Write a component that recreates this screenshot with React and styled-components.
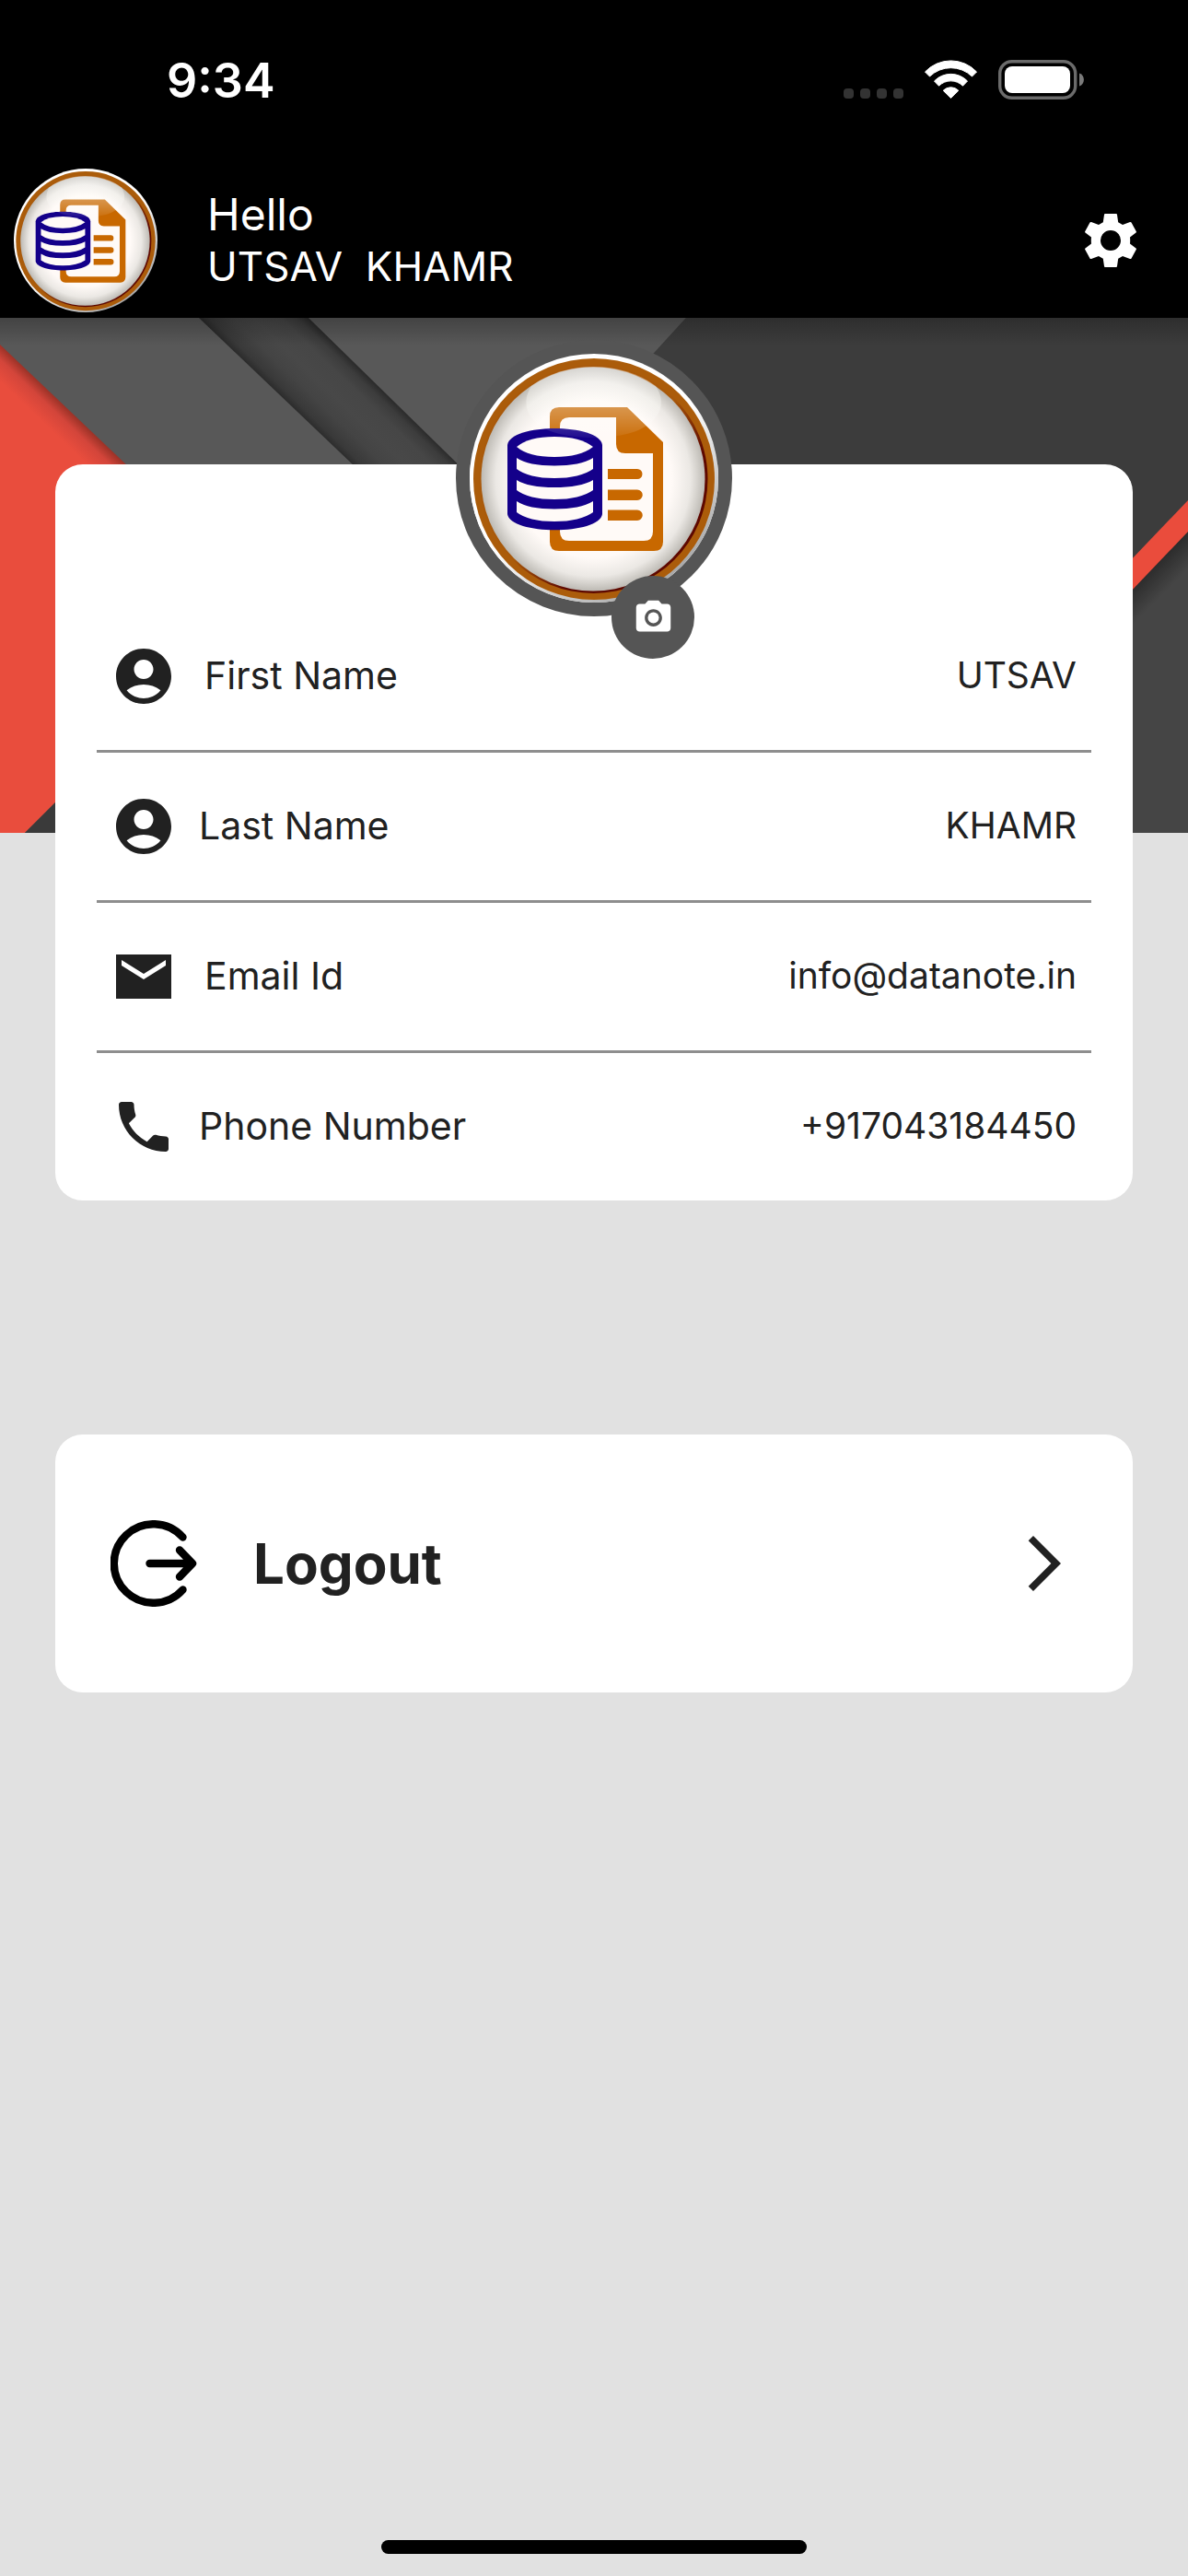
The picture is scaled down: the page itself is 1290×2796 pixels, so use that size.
import React from 'react';
import styled, { createGlobalStyle } from 'styled-components';
import { MdAccountCircle, MdPhone, MdCameraAlt, MdArrowForwardIos } from 'react-icons/md';

const GlobalStyle = createGlobalStyle`
  * { box-sizing: border-box; }
  body {
    margin: 0;
    background-color: #e1e1e1;
    color: #212121;
    font-family: Inter, Roboto, sans-serif;
  }
`;

const user = {
  firstName: 'UTSAV',
  lastName: 'KHAMR',
  email: 'info@datanote.in',
  phone: '+917043184450',
};

const MailIcon = () => (
  <svg viewBox="0 0 24 24" fill="currentColor" width="1em" height="1em">
    <path d="M22 4H2v16h20V4zm-2 4-8 5-8-5V6l8 5 8-5v2z" />
  </svg>
);

const fields = [
  { label: 'First Name', value: user.firstName, icon: <MdAccountCircle />, inset: true },
  { label: 'Last Name', value: user.lastName, icon: <MdAccountCircle /> },
  { label: 'Email Id', value: user.email, icon: <MailIcon />, inset: true },
  { label: 'Phone Number', value: user.phone, icon: <MdPhone /> },
];

const SettingsIcon = () => (
  <svg viewBox="0 0 56 58" fill="currentColor" width="56" height="58">
    <path
      fillRule="evenodd"
      d="M22 0h12q1 0 1 1l1.200 8.300 4.800 2.700 8-3q1-.3 1.500.5l5.300 9.700q.4.800-.3 1.300l-6.500 5q.4 3.500 0 7l6.500 5q.7.500.3 1.300l-5.300 9.700q-.5.800-1.500.5l-8-3-4.800 2.700L35 57q0 1-1 1H22q-1 0-1-1l-1.200-8.300L15 46l-8 3q-1 .3-1.500-.5L.2 38.800q-.4-.8.3-1.300l6.500-5q-.4-3.500 0-7l-6.500-5q-.7-.5-.3-1.300l5.300-9.700Q6 8.700 7 9l8 3 4.800-2.700L21 1q0-1 1-1zM28 18a11 11 0 1 0 0 22a11 11 0 1 0 0-22z"
    />
  </svg>
);

const StatusIcons = () => (
  <svg width="262" height="44" viewBox="0 0 262 44">
    <g fill="#333">
      <rect x="0" y="31" width="11" height="11" rx="4" />
      <rect x="18" y="31" width="11" height="11" rx="4" />
      <rect x="36" y="31" width="11" height="11" rx="4" />
      <rect x="54" y="31" width="11" height="11" rx="4" />
    </g>
    <g fill="#fff" stroke="#fff" strokeWidth="1" strokeLinejoin="round">
      <path d="M88.500 13a38.500 38.500 0 0 1 56 0l-5 5a33 33 0 0 0-46 0z" />
      <path d="M98.500 23a25 25 0 0 1 36 0l-5 5.200a18.500 18.500 0 0 0-26 0z" />
      <path d="M108.200 33.300a11.500 11.500 0 0 1 16.600 0l-8.300 8.200z" />
    </g>
    <rect x="169.700" y="1.700" width="82" height="39.600" rx="13" fill="none" stroke="#6b6b6b" strokeWidth="3.400" />
    <rect x="175" y="7" width="71" height="29" rx="8" fill="#fff" />
    <path d="M256 14.500c6.500 2 6.500 12 0 14z" fill="#7a7a7a" />
  </svg>
);

const LogoutIcon = () => (
  <svg width="94" height="94" viewBox="0 0 94 94" fill="none" stroke="#000" strokeWidth="8.400" strokeLinecap="round" strokeLinejoin="round">
    <path d="M78.500 18.500a42.800 42.800 0 1 0 0 57" />
    <path d="M42.500 47h46M75 32.500 89 47 75 61.500" />
  </svg>
);

// round data/document badge, used in the app bar and on the profile card
const Logo = ({ id, size }) => (
  <svg width={size} height={size} viewBox="0 0 270 270">
    <defs>
      <linearGradient id={`${id}-rim`} x1="0.2" y1="0.1" x2="0.8" y2="0.9">
        <stop offset="0.5" stopColor="#fff" />
        <stop offset="1" stopColor="#a9a9a9" />
      </linearGradient>
      <radialGradient id={`${id}-disk`}>
        <stop offset="0.7" stopColor="#fffaf7" />
        <stop offset="0.87" stopColor="#ebe8e4" />
        <stop offset="1" stopColor="#bdbab4" />
      </radialGradient>
      <linearGradient id={`${id}-ring`} x1="0.2" y1="0.2" x2="0.8" y2="0.8">
        <stop offset="0.5" stopColor="#a9590a" />
        <stop offset="0.8" stopColor="#5e0800" />
      </linearGradient>
      <linearGradient id={`${id}-gloss`} x1="0" y1="0" x2="0" y2="1">
        <stop offset="0" stopColor="#fff" stopOpacity="0.4" />
        <stop offset="0.5" stopColor="#fffffa" stopOpacity="0.35" />
        <stop offset="1" stopColor="#fff" stopOpacity="0.05" />
      </linearGradient>
    </defs>
    <circle cx="135" cy="135" r="135" fill={`url(#${id}-rim)`} />
    <circle cx="135" cy="136" r="131" fill="#ab5c0a" />
    <circle cx="134.500" cy="136" r="124" fill={`url(#${id}-ring)`} />
    <circle cx="134" cy="136" r="121.500" fill={`url(#${id}-disk)`} />
    <path
      d="M97 58h74l39 38v108q0 10-10 10H97q-10 0-10-10V68q0-10 10-10z"
      fill="#c86800"
    />
    <path d="M108 69h51v29q0 10 10 10h30v85q0 10-10 10h-81q-10 0-10-10V79q0-10 10-10z" fill="#fffaf7" />
    <path
      d="M150 125h32a5.500 5.500 0 0 1 0 11h-32zM150 147.500h32a5.500 5.500 0 0 1 0 11.500h-32zM150 169.500h32a5.500 5.500 0 0 1 0 11.500h-32z"
      fill="#c86800"
    />
    <path d="M41 99C44 75 141 75 144 99v75C141 197 44 197 41 174z" fill="#14008a" />
    <g fill="#fffaf7">
      <path d="M51 101Q64 90 92 90T134 101Q120 112 92 112T51 101z" />
      <path d="M51 113Q64 121.500 92 121.500T134 113V125Q120 135 92 135T51 125z" />
      <path d="M51 137Q64 145 92 145T134 137V148Q120 158 92 158T51 148z" />
      <path d="M51 160Q64 168.500 92 168.500T134 160V172Q120 182 92 182T51 172z" />
    </g>
    <path d="M67 35C104 7 165 7 202 35C218 58 203 91 134 91S52 58 67 35z" fill={`url(#${id}-gloss)`} />
  </svg>
);

// layered paper banner behind the profile card
const BannerArt = () => (
  <BannerSvg viewBox="0 0 1290 559" preserveAspectRatio="xMidYMin slice" aria-hidden="true">
    <defs>
      <linearGradient id="bar-shadow" x1="0" y1="0" x2="0" y2="1">
        <stop offset="0" stopColor="#000" stopOpacity="0.24" />
        <stop offset="1" stopColor="#000" stopOpacity="0" />
      </linearGradient>
      <linearGradient id="band" gradientUnits="userSpaceOnUse" x1="216" y1="0" x2="273" y2="-59">
        <stop offset="0" stopColor="#2a2a2a" />
        <stop offset="0.1" stopColor="#393939" />
        <stop offset="0.3" stopColor="#444" />
        <stop offset="0.5" stopColor="#484848" />
        <stop offset="0.75" stopColor="#464646" />
        <stop offset="0.9" stopColor="#3c3c3c" />
        <stop offset="1" stopColor="#2a2a2a" />
      </linearGradient>
      <linearGradient id="red" gradientUnits="userSpaceOnUse" x1="0" y1="29" x2="-20" y2="50">
        <stop offset="0" stopColor="#9c3227" />
        <stop offset="0.4" stopColor="#d3453a" />
        <stop offset="1" stopColor="#e94d3d" />
      </linearGradient>
      <linearGradient id="fold" gradientUnits="userSpaceOnUse" x1="1230" y1="293" x2="1250" y2="313">
        <stop offset="0" stopColor="#2c2c2c" />
        <stop offset="1" stopColor="#454545" />
      </linearGradient>
    </defs>
    <rect width="1290" height="559" fill="#454545" />
    <path d="M0 0h745L480 290H0z" fill="#585858" />
    <path d="M745 0h545v214L960 559H480V290z" fill="#3c3c3c" />
    <path d="M216 0h119l187 183H408z" fill="url(#band)" />
    <path d="M0 29 200 219V387L27 559H0z" fill="url(#red)" />
    <path d="M27 559 60 526 90 559z" fill="#3a3a3a" />
    <path d="M1290 230v329H960z" fill="url(#fold)" />
    <path d="M1290 198v34L1100 431v-34z" fill="#ea4c3c" />
    <rect width="1290" height="30" fill="url(#bar-shadow)" />
  </BannerSvg>
);

export default function App() {
  return (
    <Page>
      <GlobalStyle />
      <Header>
        <StatusBar>
          <Time>9:34</Time>
          <StatusIcons />
        </StatusBar>
        <AppBar>
          <Logo id="small" size={156} />
          <Greeting>
            <Hello>Hello</Hello>
            <UserName>{user.firstName}{'  '}{user.lastName}</UserName>
          </Greeting>
          <IconButton aria-label="Settings">
            <SettingsIcon />
          </IconButton>
        </AppBar>
      </Header>

      <Profile>
        <BannerArt />
        <ProfileCard>
          <Avatar>
            <Logo id="large" size={270} />
            <CameraButton aria-label="Change photo">
              <MdCameraAlt />
            </CameraButton>
          </Avatar>
          <FieldList>
            {fields.map(field => (
              <Field key={field.label}>
                <Label $inset={field.inset}>
                  {field.icon}
                  <span>{field.label}</span>
                </Label>
                <Value>{field.value}</Value>
              </Field>
            ))}
          </FieldList>
        </ProfileCard>
      </Profile>

      <LogoutButton>
        <LogoutIcon />
        <LogoutText>Logout</LogoutText>
        <MdArrowForwardIos size={72} />
      </LogoutButton>

      <HomeIndicator />
    </Page>
  );
}

const Page = styled.div`
  display: flex;
  flex-direction: column;
  min-height: 100vh;
`;

const Header = styled.header`
  background-color: #000;
  color: #fff;
`;

const StatusBar = styled.div`
  display: flex;
  align-items: center;
  justify-content: space-between;
  height: 177px;
  padding: 0 112px 3px 181px;
`;

const Time = styled.span`
  font-size: 52px;
  font-weight: 600;
`;

const AppBar = styled.div`
  display: flex;
  align-items: center;
  height: 168px;
  padding: 0 56px 0 15px;
`;

const Greeting = styled.div`
  flex: 1;
  padding-left: 54px;
  white-space: pre;
  line-height: 56px;
`;

const Hello = styled.div`
  font-size: 48px;
`;

const UserName = styled.div`
  font-size: 44px;
`;

const IconButton = styled.button`
  display: flex;
  padding: 0;
  border: none;
  background: none;
  color: inherit;
`;

const Profile = styled.section`
  display: grid;

  > * {
    grid-area: 1 / 1;
  }
`;

const BannerSvg = styled.svg`
  width: 100%;
  height: 559px;
`;

const Card = styled.div`
  margin: 0 60px;
  background-color: #fff;
  border-radius: 30px;
`;

const ProfileCard = styled(Card)`
  margin-top: 159px;
  z-index: 1;
`;

const Avatar = styled.div`
  position: relative;
  display: flex;
  width: 300px;
  height: 300px;
  margin: -135px auto -15px;
  border: 15px solid #555;
  border-radius: 50%;
`;

const CameraButton = styled.button`
  position: absolute;
  right: 26px;
  bottom: -61px;
  display: flex;
  align-items: center;
  justify-content: center;
  width: 90px;
  height: 90px;
  padding: 0;
  border: none;
  border-radius: 50%;
  background-color: #555;
  color: #fff;
  font-size: 45px;
`;

const FieldList = styled.dl`
  margin: 0 45px;
`;

const Field = styled.div`
  display: flex;
  align-items: center;
  justify-content: space-between;
  height: 160px;
  padding: 0 16px 0 15px;

  & + & {
    box-sizing: content-box;
    border-top: 3px solid #8e8e8e;
  }
`;

const Label = styled.dt`
  display: flex;
  align-items: center;
  gap: ${props => (props.$inset ? '30px' : '24px')};
  font-size: 41px;

  svg {
    font-size: 72px;
  }

  span {
    padding-bottom: 2px;
  }
`;

const Value = styled.dd`
  margin: 0;
  padding-bottom: 4px;
  font-size: 39px;
`;

const LogoutButton = styled(Card).attrs({ as: 'button' })`
  display: flex;
  align-items: center;
  height: 280px;
  margin-top: 254px;
  padding: 0 60px;
  border: none;
  color: inherit;
  font-family: inherit;
`;

const LogoutText = styled.span`
  flex: 1;
  padding-left: 61px;
  text-align: left;
  font-size: 60px;
  font-weight: 700;
`;

const HomeIndicator = styled.div`
  width: 462px;
  height: 15px;
  margin: auto auto 24px;
  border-radius: 8px;
  background-color: #000;
`;
